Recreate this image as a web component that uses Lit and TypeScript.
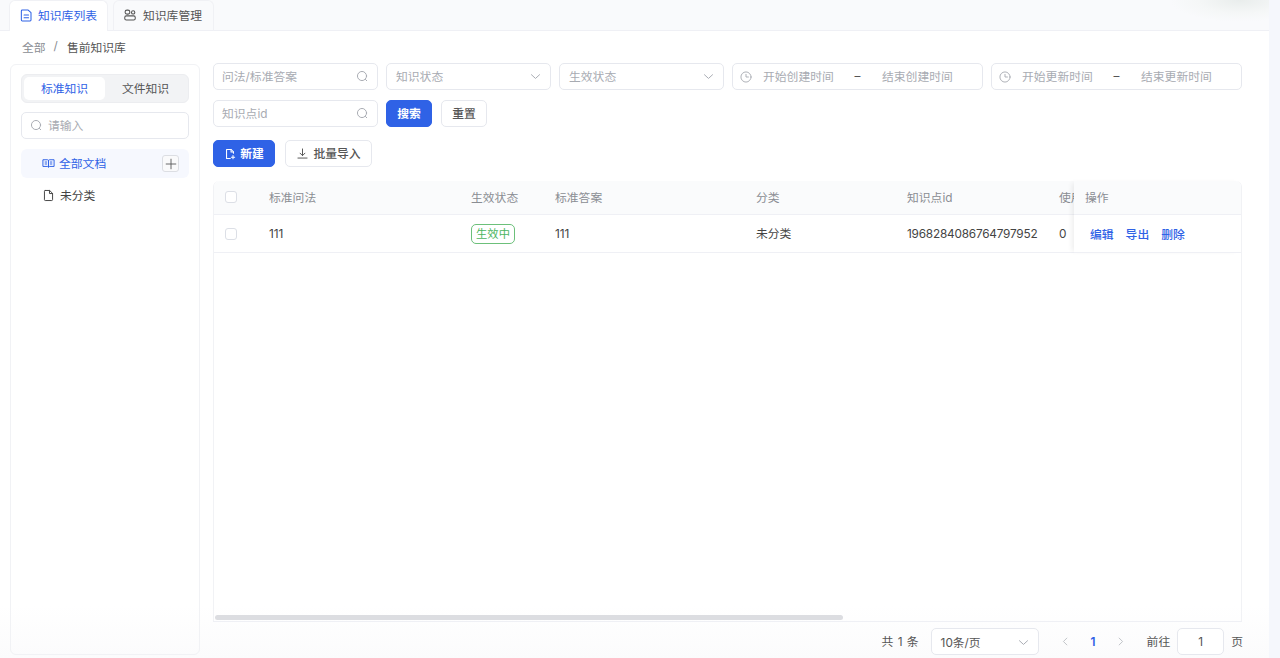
import { LitElement, html, css, svg } from "lit";
import { customElement } from "lit/decorators.js";

const ic = (size: number, body: unknown, color = "currentColor", sw = 1.2) => html`<svg class="ic" width=${size} height=${size} viewBox="0 0 16 16" fill="none" stroke=${color} stroke-width=${sw} stroke-linecap="round" stroke-linejoin="round">${body}</svg>`;
const searchI = svg`<circle cx="7.4" cy="7.4" r="5.6"/><path d="M11.6 11.6l1.6 1.6"/>`;
const chevron = svg`<path d="M3 5.8l5 4.6 5-4.6"/>`;
const clock = svg`<circle cx="8" cy="8" r="5.8"/><path d="M8 5v3h2.800"/>`;

@customElement("app-root")
export class AppRoot extends LitElement {
  static styles = css`
    :host { display: block; width: 1280px; height: 658px; overflow: hidden; font-family: Inter, "Noto Sans CJK SC", sans-serif; font-size: 11.8px; color: #444; background: #f5f7fc; }
    * { box-sizing: border-box; }
    .ic { display: block; flex: none; }
    .page { width: 1269px; height: 658px; display: flex; flex-direction: column; background: linear-gradient(180deg, #fff 0, #fff 92%, #fbfbfc 100%); }
    .tabs { height: 31px; flex: none; display: flex; gap: 5px; padding-left: 9px; border-bottom: 1px solid #eff0f5; background: radial-gradient(ellipse 70px 22px at 1240px 0, #e9edec 0, #f5f7f7 60%, transparent 100%), #f9fafc; }
    .tab { width: 99px; height: 31px; display: flex; align-items: center; gap: 4px; padding: 0 0 4px 9px; border: 1px solid #f0f1f5; border-bottom: 0; border-radius: 6px 6px 0 0; color: #555; }
    .tab .ic { margin-top: 2px; }
    .tab.on { background: #fff; color: #2f62e6; }
    .tab + .tab { width: 101px; gap: 6px; }
    .crumb { height: 32px; flex: none; display: flex; align-items: center; padding: 0 0 2px 22px; color: #8a8d93; }
    .crumb i { font-style: normal; margin: 0 9px 0 8px; }
    .crumb b { font-weight: 400; color: #555; }
    .body { flex: 1; min-height: 0; display: flex; gap: 13px; padding: 0 27px 3px 10px; }
    .side { width: 190px; flex: none; border: 1px solid #f1f2f5; border-radius: 6px; padding: 9px 10px; margin-top: 1px; display: flex; flex-direction: column; }
    .seg { height: 29px; display: flex; padding: 2px; background: #f2f3f5; border: 1px solid #ecedf0; border-radius: 6px; flex: none; }
    .seg span { flex: 1; display: flex; align-items: center; justify-content: center; border-radius: 5px; color: #555; padding-bottom: 2px; }
    .seg .on { background: #fff; color: #2f62e6; flex: none; width: 81px; }
    .field { height: 27px; display: flex; align-items: center; border: 1px solid #e6e8ee; border-radius: 5px; background: #fff; color: #a8abb2; padding: 0 8px 2px; flex: none; }
    .field .ic { margin-top: 2px; }
    .side .field { margin-top: 9px; gap: 5px; }
    .tree { margin-top: 10px; height: 29px; display: flex; align-items: center; border-radius: 6px; padding: 0 10px 2px 21px; gap: 4px; color: #2f62e6; background: #f6f8fe; flex: none; }
    .tree > .ic, .tree > .add { margin-top: 2px; }
    .tree.plain { background: none; color: #444; margin-top: 3px; gap: 5px; }
    .tree .sp { flex: 1; }
    .add { width: 17px; height: 17px; border: 1px solid #dcdee3; border-radius: 3px; display: flex; align-items: center; justify-content: center; color: #555; background: #fafafb; }
    .main { flex: 1; min-width: 0; display: flex; flex-direction: column; }
    .row { display: flex; gap: 8px; margin-bottom: 10px; flex: none; }
    .w165 { width: 165px; justify-content: space-between; }
    .sel { padding-left: 9px; }
    .w251 { width: 251px; padding: 0 0 2px 6px; }
    .w251 .s { width: 70px; white-space: nowrap; }
    .w251 .s.first { margin-left: 10px; }
    .w251 .d { color: #555; width: 49px; text-align: center; }
    .btn { height: 27px; display: flex; align-items: center; justify-content: center; gap: 4px; border: 1px solid #e6e8ee; border-radius: 5px; font-weight: 500; color: #555; background: #fff; flex: none; padding-bottom: 2px; }
    .btn .ic { margin-top: 2px; }
    .btn.pri { background: #2f62e6; border-color: #2f62e6; color: #fff; font-weight: 600; }
    .b46 { width: 46px; }
    .reset { margin-left: 1px; }
    .acts { margin: 3px 0 14px; gap: 10px; }
    .b62 { width: 62px; }
    .b87 { width: 87px; }
    .table { flex: 1; min-height: 0; display: flex; flex-direction: column; border-right: 1px solid #f1f2f5; border-left: 1px solid #f1f2f5; border-radius: 6px 6px 0 0; }
    .cols { flex: 1; min-height: 0; display: flex; align-items: flex-start; }
    .scroll { flex: 1; min-width: 0; overflow: hidden; }
    .fixed { width: 167px; flex: none; box-shadow: -4px 0 5px -2px rgba(0,0,0,.07); }
    .tr { display: grid; grid-template-columns: 55px 202px 84px 201px 151px 152px 80px; align-items: center; white-space: nowrap; border-bottom: 1px solid #eff0f5; width: 925px; }
    .tr.h { height: 34px; background: #fafbfc; color: #8a8d93; border-radius: 6px 0 0 0; padding-bottom: 2px; }
    .tr.d { height: 38px; }
    .fixed .tr { display: flex; width: auto; padding-left: 11px; }
    .fixed .tr.d { gap: 12px; padding-left: 16px; color: #2f62e6; font-weight: 500; }
    .fixed .tr.h { border-radius: 0 6px 0 0; }
    .cb { width: 12px; height: 12px; border: 1px solid #dcdfe6; border-radius: 3px; margin-left: 11px; background: #fff; }
    .tag { width: 44px; height: 20px; display: flex; align-items: center; justify-content: center; border: 1px solid #6cc07a; border-radius: 5px; color: #4cb55f; font-size: 11.3px; padding-bottom: 2px; }
    .id { letter-spacing: -0.2px; }
    .zh { margin-bottom: 2px; }
    .bar { height: 6px; flex: none; }
    .thumb { width: 628px; height: 5px; margin-left: 1px; border-radius: 3px; background: #dcdde1; }
    .rule { height: 1px; background: #eff0f5; flex: none; }
    .pager { height: 33px; flex: none; display: flex; align-items: center; justify-content: flex-end; color: #555; padding-top: 6px; margin-right: -1px; }
    .total { word-spacing: 1px; margin-bottom: 2px; }
    .size { width: 108px; justify-content: space-between; color: #555; margin: 0 21px 0 12px; padding: 0 8px 1px 9px; }
    .num { color: #2f62e6; font-weight: 600; margin: 0 19px 0 20px; }
    .jump { width: 47px; justify-content: center; color: #555; margin: 0 7px; padding-bottom: 0; }
    .pg { color: #b5b8be; }
    .goto { margin: 0 0 2px 21px; }
    .unit { margin-bottom: 2px; }
  `;

  render() {
    return html`<div class="page">
      <div class="tabs">
        <div class="tab on">${ic(15, svg`<path d="M3.500 2.200h6.300L12.800 5v7.800c0 .6-.4 1-1 1H3.500c-.6 0-1-.4-1-1V3.200c0-.6.4-1 1-1z"/><path d="M5.400 7.400h4.800M5.400 10.400h4.800"/>`, "currentColor", 1.1)}知识库列表</div>
        <div class="tab">${ic(14, svg`<rect x="2.400" y="2.400" width="5.400" height="4.600" rx="2.200"/><circle cx="11.600" cy="5" r="1.900"/><rect x="2" y="9" width="12" height="4.800" rx="1.800"/>`)}知识库管理</div>
      </div>
      <div class="crumb">全部<i>/</i><b>售前知识库</b></div>
      <div class="body">
        <aside class="side">
          <div class="seg"><span class="on">标准知识</span><span>文件知识</span></div>
          <div class="field">${ic(13, searchI)}请输入</div>
          <div class="tree">${ic(13, svg`<path d="M1.600 3.400h5.200c.7 0 1.200.4 1.200 1v8.200c0-.6-.5-1-1.200-1H1.600zM14.400 3.400H9.200c-.7 0-1.200.4-1.200 1v8.200c0-.6.5-1 1.200-1h5.200z"/><path d="M3.800 6.200h2M3.800 8.600h2M10.200 6.200h2M10.200 8.600h2"/>`)}全部文档<span class="sp"></span><span class="add">${ic(14, svg`<path d="M8 2.500v11M2.500 8h11"/>`, "currentColor", 1)}</span></div>
          <div class="tree plain">${ic(13, svg`<path d="M4 1.800h5.400L13 5.400v7.800c0 .6-.4 1-1 1H4c-.6 0-1-.4-1-1V2.800c0-.6.4-1 1-1z"/><path d="M9.200 2v3.600H13"/>`, "#444", 1.2)}未分类</div>
        </aside>
        <main class="main">
          <div class="row">
            <div class="field w165">问法/标准答案${ic(13, searchI)}</div>
            <div class="field w165 sel">知识状态${ic(13, chevron)}</div>
            <div class="field w165 sel">生效状态${ic(13, chevron)}</div>
            <div class="field w251">${ic(14, clock, "currentColor", 1.05)}<span class="s first">开始创建时间</span><span class="d">–</span><span class="s">结束创建时间</span></div>
            <div class="field w251">${ic(14, clock, "currentColor", 1.05)}<span class="s first">开始更新时间</span><span class="d">–</span><span class="s">结束更新时间</span></div>
          </div>
          <div class="row">
            <div class="field w165">知识点id${ic(13, searchI)}</div>
            <div class="btn pri b46">搜索</div>
            <div class="btn b46 reset">重置</div>
          </div>
          <div class="row acts">
            <div class="btn pri b62">${ic(12, svg`<path d="M12.600 7V5L9.600 2H3.400v12h5"/><path d="M9.400 2v3.200h3.200M12 10v4.400M9.800 12.200h4.400"/>`, "#fff", 1.4)}新建</div>
            <div class="btn b87">${ic(13, svg`<path d="M8 2.400v8M5 7.600l3 3 3-3M2.400 13.600h11.200"/>`, "#555", 1.2)}批量导入</div>
          </div>
          <div class="table">
            <div class="cols">
              <div class="scroll">
                <div class="tr h"><span class="cb"></span><span>标准问法</span><span>生效状态</span><span>标准答案</span><span>分类</span><span>知识点id</span><span>使用次数</span></div>
                <div class="tr d"><span class="cb"></span><span>111</span><span><span class="tag">生效中</span></span><span>111</span><span class="zh">未分类</span><span class="id">1968284086764797952</span><span>0</span></div>
              </div>
              <div class="fixed">
                <div class="tr h">操作</div>
                <div class="tr d"><span>编辑</span><span>导出</span><span>删除</span></div>
              </div>
            </div>
            <div class="bar"><div class="thumb"></div></div>
          </div>
          <div class="rule"></div>
          <div class="pager">
            <span class="total">共 1 条</span>
            <div class="field size">10条/页${ic(13, chevron, "#a8abb2")}</div>
            <span class="pg">${ic(11, svg`<path d="M10 3L5 8l5 5"/>`)}</span>
            <span class="num">1</span>
            <span class="pg">${ic(11, svg`<path d="M6 3l5 5-5 5"/>`)}</span>
            <span class="goto">前往</span>
            <div class="field jump">1</div>
            <span class="unit">页</span>
          </div>
        </main>
      </div>
    </div>`;
  }
}
